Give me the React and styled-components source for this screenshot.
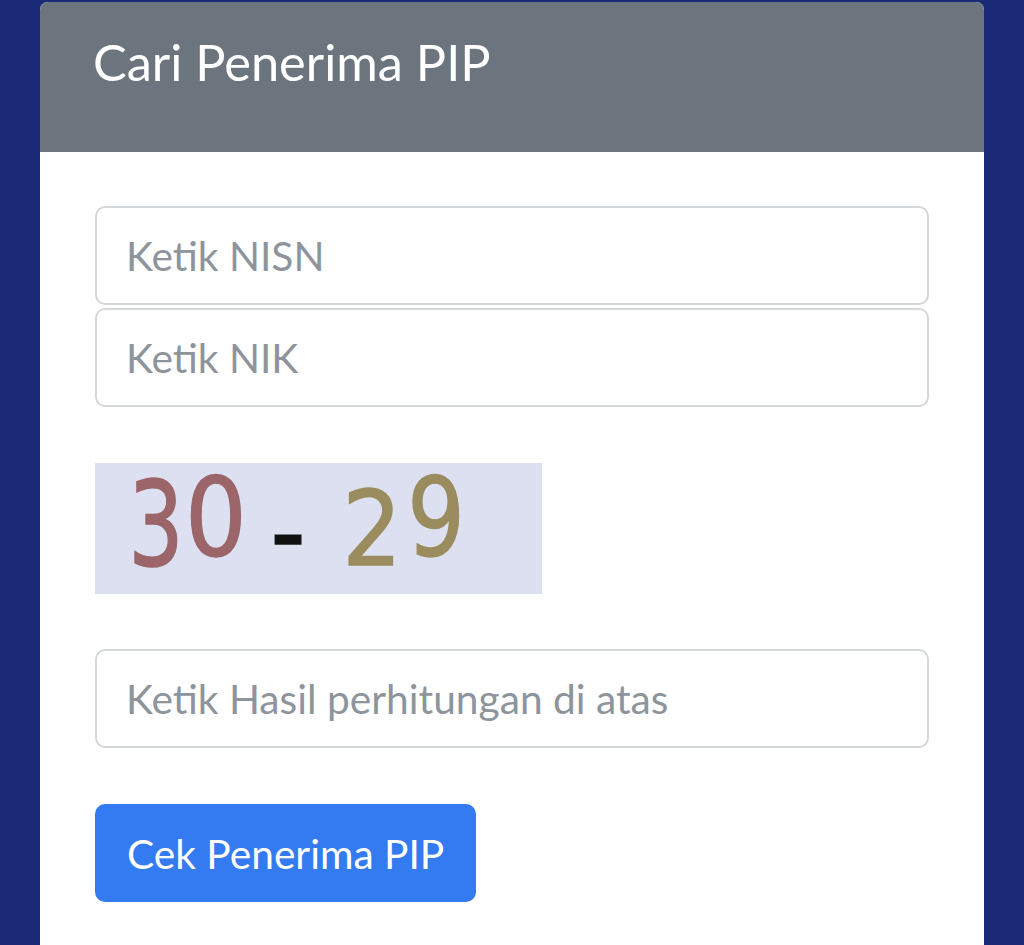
import React from 'react'
import styled, { createGlobalStyle } from 'styled-components'

const GlobalStyle = createGlobalStyle`
  html, body {
    margin: 0;
    padding: 0;
    background: #1b2a77;
  }
  * {
    box-sizing: border-box;
  }
`

const Page = styled.div`
  height: 945px;
  overflow: hidden;
  padding: 2px 40px 0;
  font-family: Lato, "Noto Sans", sans-serif;
`

const Card = styled.div`
  background: #fff;
  border-radius: 8px 8px 0 0;
  min-height: 943px;
`

const CardHeader = styled.div`
  background: #6c757d;
  height: 150px;
  border-radius: 8px 8px 0 0;
  padding: 30px 53px 0;
`

const Title = styled.h3`
  margin: 0;
  font-size: 50.5px;
  font-weight: 400;
  line-height: 1.2;
  color: #fff;
`

const CardBody = styled.div`
  padding: 54px 55px;
  display: flex;
  flex-direction: column;
  align-items: flex-start;
`

const FieldGroup = styled.div`
  width: 100%;
  display: flex;
  flex-direction: column;
  gap: 3px;
`

const Input = styled.input`
  width: 100%;
  height: 99px;
  border: 2px solid #d4d7da;
  border-radius: 10px;
  padding: 0 29px;
  font-family: Lato, "Noto Sans", sans-serif;
  font-size: 40.7px;
  color: #495057;
  background: #fff;
  outline: none;

  &::placeholder {
    color: #8d949b;
  }
`

const Captcha = styled.svg`
  display: block;
  margin: 56px 0 55px;
  width: 447px;
  height: 131px;
  background: #dde0f0;
  overflow: visible;
`

const Button = styled.button`
  margin-top: 56px;
  height: 98px;
  padding: 0 32px;
  border: none;
  border-radius: 10px;
  background: #347af0;
  color: #fff;
  font-family: Lato, "Noto Sans", sans-serif;
  font-size: 40.7px;
  cursor: pointer;
`

// captcha characters: centre x, baseline y, size, horizontal squeeze
const glyphs = [
  { ch: '3', x: 61, y: 102, size: 118, sx: 0.74, color: '#9b6569' },
  { ch: '0', x: 121, y: 92, size: 108, sx: 0.9, color: '#9b6569' },
  { ch: '-', x: 193, y: 106, size: 108, sx: 0.9, color: '#111' },
  { ch: '2', x: 277, y: 102, size: 104, sx: 0.9, color: '#9a8c5e' },
  { ch: '9', x: 341, y: 92, size: 108, sx: 0.84, color: '#9a8c5e' }
]

export default function App() {
  return (
    <Page>
      <GlobalStyle />
      <Card>
        <CardHeader>
          <Title>Cari Penerima PIP</Title>
        </CardHeader>
        <CardBody>
          <FieldGroup>
            <Input placeholder="Ketik NISN" />
            <Input placeholder="Ketik NIK" />
          </FieldGroup>
          <Captcha viewBox="0 0 447 131">
            {glyphs.map((g, i) => (
              <text
                key={i}
                transform={`translate(${g.x} ${g.y}) scale(${g.sx} 1)`}
                textAnchor="middle"
                fontFamily="DejaVu Sans, sans-serif"
                fontSize={g.size}
                fill={g.color}
                stroke={g.color}
                strokeWidth="1.5"
              >
                {g.ch}
              </text>
            ))}
          </Captcha>
          <FieldGroup>
            <Input placeholder="Ketik Hasil perhitungan di atas" />
          </FieldGroup>
          <Button>Cek Penerima PIP</Button>
        </CardBody>
      </Card>
    </Page>
  )
}
